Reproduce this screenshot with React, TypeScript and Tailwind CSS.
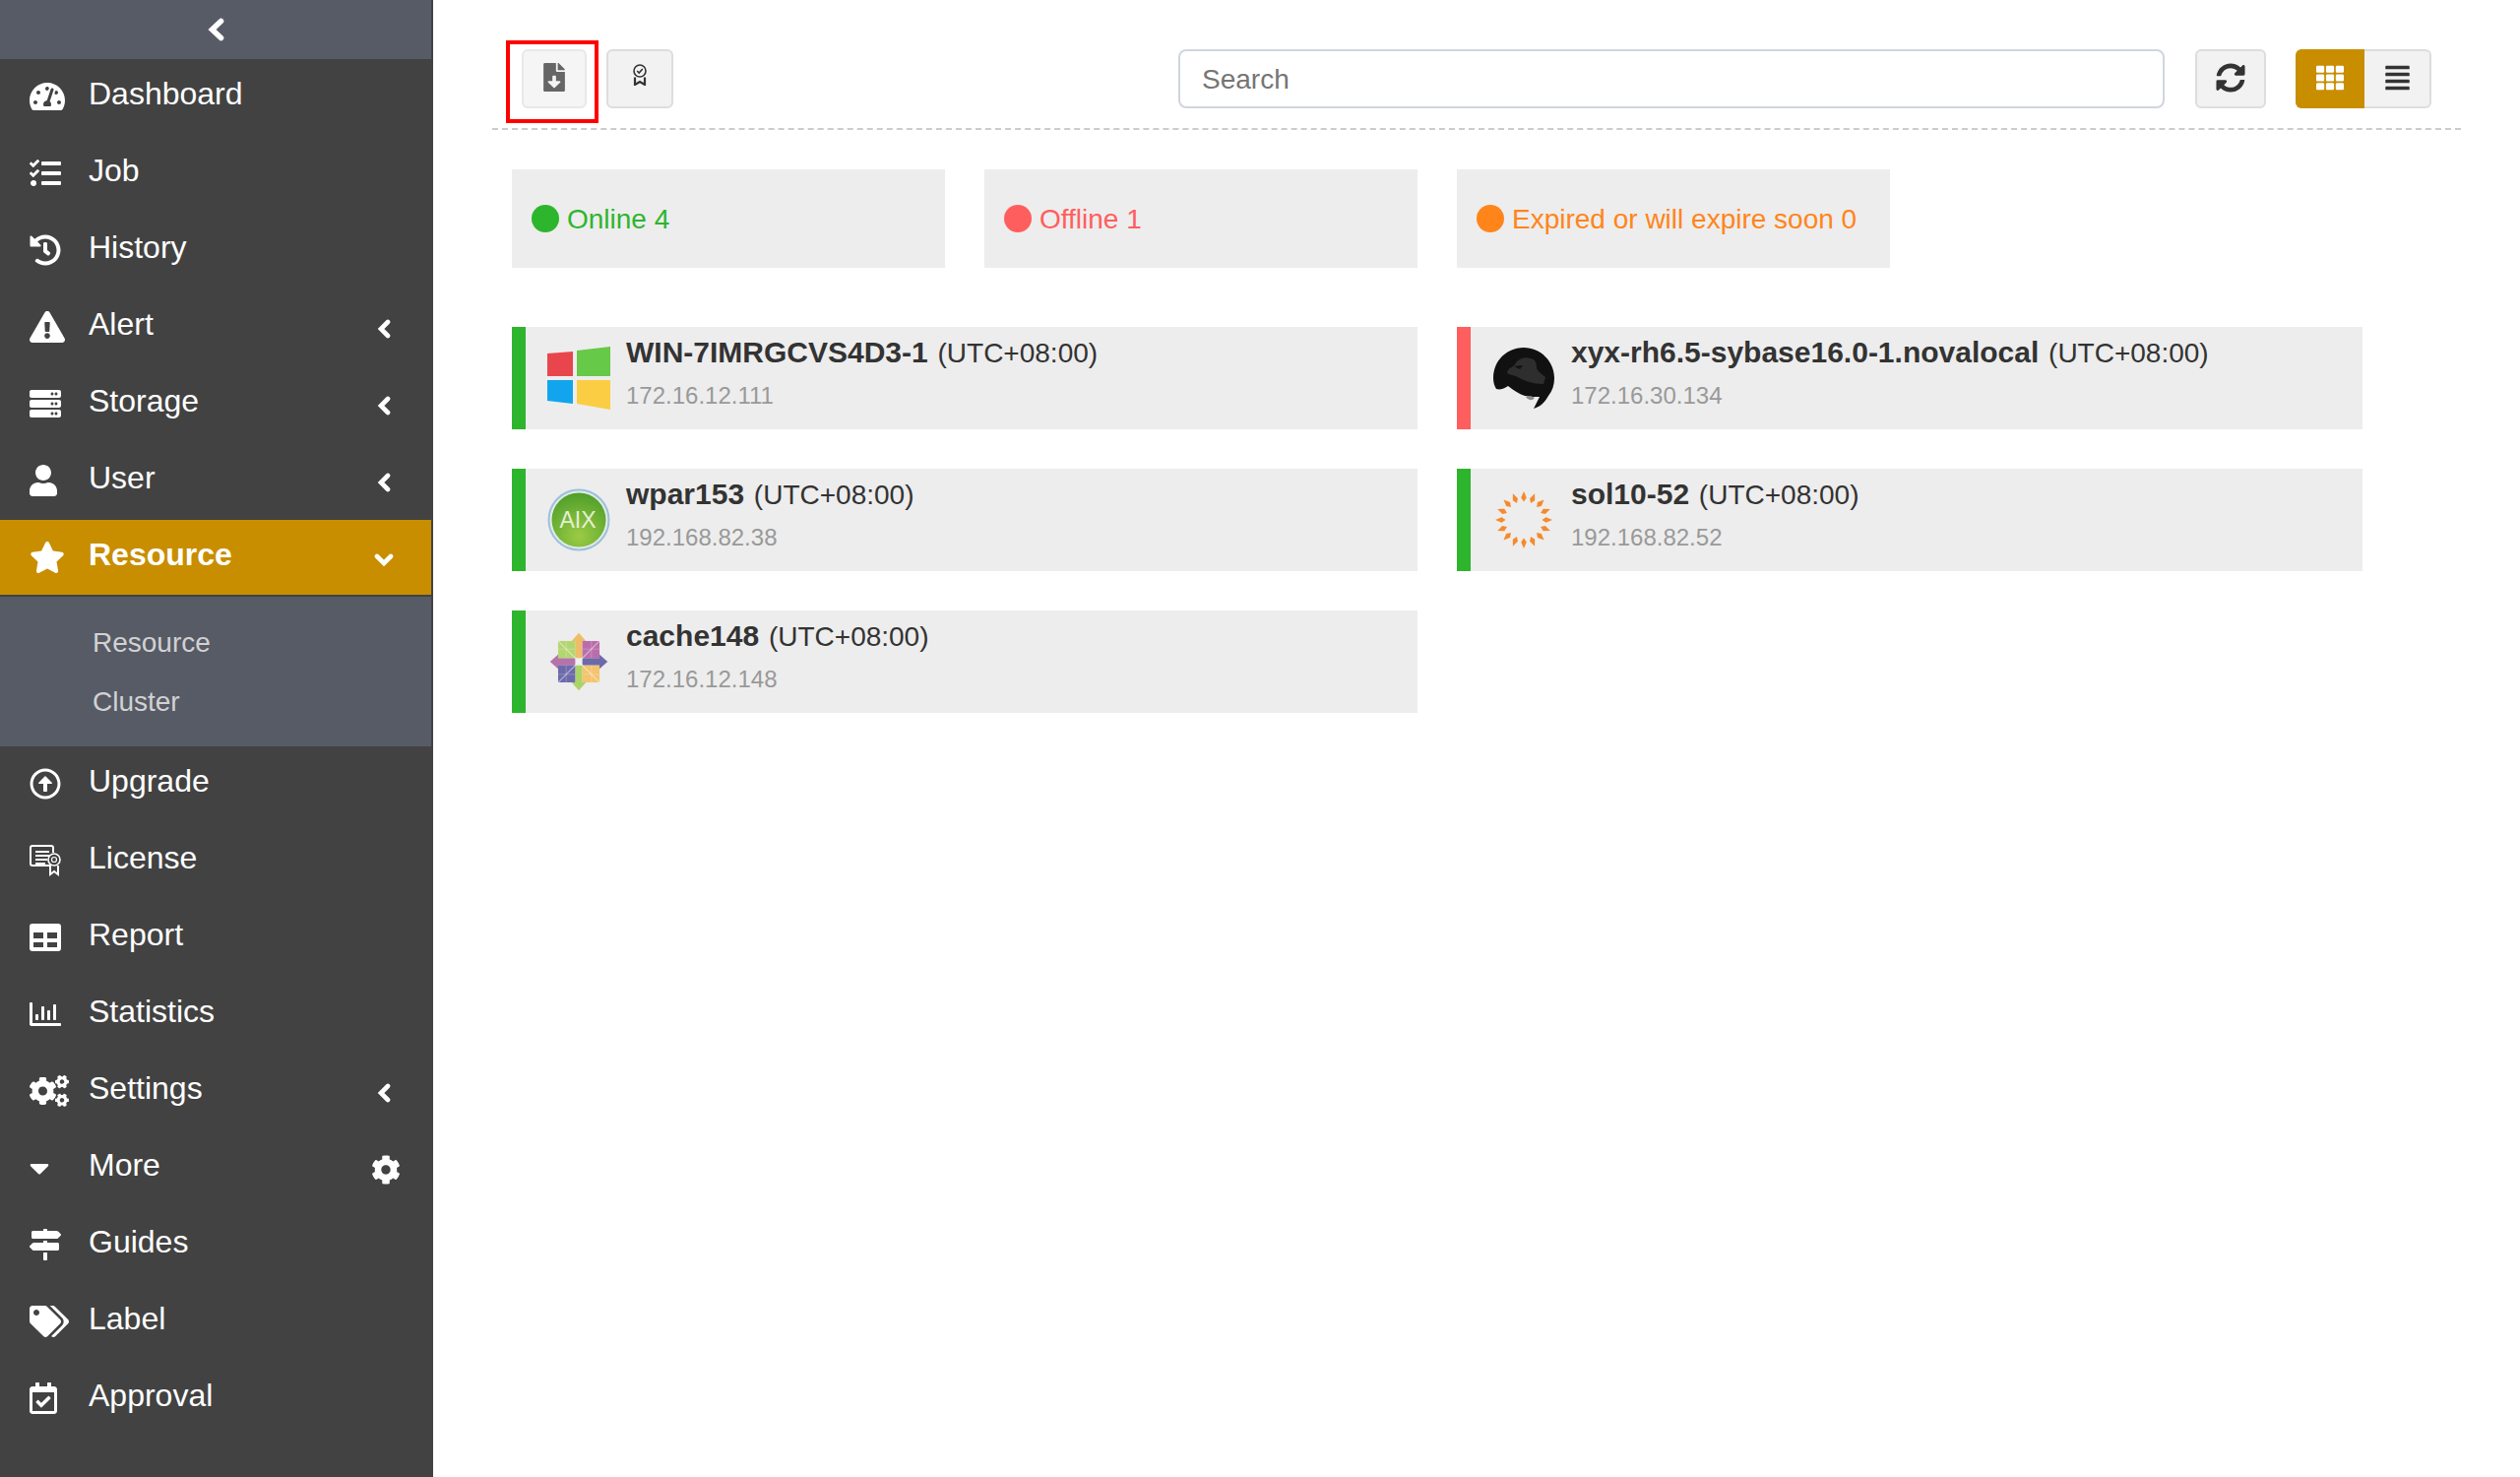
import { FC, ReactNode } from 'react';
import {
  FaAlignJustify,
  FaCaretDown,
  FaCog,
  FaCogs,
  FaExclamationTriangle,
  FaFileDownload,
  FaHistory,
  FaMapSigns,
  FaRegArrowAltCircleUp,
  FaRegCalendarCheck,
  FaRegChartBar,
  FaServer,
  FaStar,
  FaSyncAlt,
  FaTachometerAlt,
  FaTags,
  FaTasks,
  FaTh,
  FaUser,
} from 'react-icons/fa';

const ChevronLeft = () => (
  <svg width="14" height="20" viewBox="0 0 14 20" fill="none" stroke="currentColor" strokeWidth="4.6" strokeLinecap="round" className="-ml-[2px]">
    <path d="M11 3l-7 7 7 7" />
  </svg>
);

const ChevronDown = () => (
  <svg width="20" height="13" viewBox="0 0 20 13" fill="none" stroke="currentColor" strokeWidth="4.6" strokeLinecap="round">
    <path d="M3 3l7 7 7-7" />
  </svg>
);

const LicenseIcon = () => (
  <svg width="32" height="32" viewBox="0 0 32 32" fill="none" stroke="currentColor">
    <path d="M22 21H3a2 2 0 0 1-2-2V3a2 2 0 0 1 2-2h19a2 2 0 0 1 2 2v5" strokeWidth="2" />
    <path d="M6 7h14M6 11h14M6 15h12M6 19h10" strokeWidth="2" />
    <circle cx="25" cy="15" r="6" strokeWidth="1.6" />
    <circle cx="25" cy="15" r="2.5" strokeWidth="1.2" />
    <path d="M21 21v9l4-3 4 3v-9" strokeWidth="2" />
  </svg>
);

const ReportIcon = () => (
  <svg width="32" height="28" viewBox="0 0 32 28" fill="currentColor">
    <path
      fillRule="evenodd"
      d="M3 0h26a3 3 0 0 1 3 3v22a3 3 0 0 1-3 3H3a3 3 0 0 1-3-3V3a3 3 0 0 1 3-3zM4 9v6h10V9zm14 0v6h10V9zM4 19v5h10v-5zm14 0v5h10v-5z"
    />
  </svg>
);

const WindowsLogo = () => (
  <svg width="64" height="64" viewBox="0 0 64 64">
    <polygon points="0,7 26,5 26,30 0,30" fill="#e8464c" />
    <polygon points="30,4 64,0 64,30 30,30" fill="#66c947" />
    <polygon points="0,34 26,34 26,58 0,55" fill="#12a5ee" />
    <polygon points="30,34 64,34 64,64 30,58" fill="#fbcd42" />
  </svg>
);

const AixLogo = () => (
  <svg width="64" height="64" viewBox="0 0 64 64">
    <defs>
      <radialGradient id="aix" cx="0.5" cy="0.8" r="0.8">
        <stop offset="0" stopColor="#9ccb45" />
        <stop offset="1" stopColor="#4f9f2a" />
      </radialGradient>
    </defs>
    <circle cx="32" cy="32" r="30.5" fill="#e3ebe6" stroke="#9cc0dc" strokeWidth="2" />
    <circle cx="32" cy="32" r="27.5" fill="url(#aix)" />
    <text x="31" y="40" textAnchor="middle" fontSize="23" fill="#e3efd6" fontFamily="Liberation Sans">
      AIX
    </text>
  </svg>
);

const RedHatLogo = () => (
  <svg width="64" height="64" viewBox="0 0 64 64">
    <path
      d="M32 1C15 1 1 14 1 32c0 4 1 8 3 11 4 1 8 0 12-3 5 4 11 8 17 10 5 1 11 1 15 1-2 4-4 8-6 12 9-3 12-8 15-13 4-5 6-11 6-18C63 15 49 1 32 1z"
      fill="#111"
    />
    <path
      d="M15 27c1-6 5-5 8-9 3-6 10-8 16-6 5 1 6 5 6 9 0 3 5 7 9 10l-2 7c-11 0-19-3-26-7-4-2-8-2-11-4z"
      fill="#2e2e2e"
    />
    <path d="M22 20l9-1-3 4z" fill="#111" />
    <path d="M34 51c3-1 6-1 9 1-2 3-6 3-9-1z" fill="#8a8a8a" />
  </svg>
);

const SOLARIS_RAYS = Array.from({ length: 16 }, (_, i) => i * 22.5);

const SolarisLogo = () => (
  <svg width="64" height="64" viewBox="0 0 64 64">
    {SOLARIS_RAYS.map((deg) => (
      <polygon
        key={deg}
        points="32,3 34.8,9.500 32,13.500 29.200,9.500"
        fill="#f58a2c"
        transform={`rotate(${deg} 32 32)`}
      />
    ))}
  </svg>
);

const CentosLogo = () => (
  <svg width="64" height="64" viewBox="-3 -3 70 70" className="opacity-80">
    <polygon points="32,0 40,9 36,9 36,28 28,28 28,9 24,9" fill="#f0b24a" />
    <polygon points="64,32 55,40 55,36 36,36 36,28 55,28 55,24" fill="#4e4a9c" />
    <polygon points="32,64 24,55 28,55 28,36 36,36 36,55 40,55" fill="#9ccd4a" />
    <polygon points="0,32 9,24 9,28 28,28 28,36 9,36 9,40" fill="#a8559c" />
    <rect x="9" y="9" width="19" height="19" fill="#a6d152" />
    <rect x="36" y="9" width="19" height="19" fill="#ad4f9b" />
    <rect x="36" y="36" width="19" height="19" fill="#f6bb4f" />
    <rect x="9" y="36" width="19" height="19" fill="#4e4a9c" />
    <path d="M9 9l23 23M55 9L32 32M9 55l23-23M55 55L32 32" stroke="#ffffff" strokeOpacity="0.5" strokeWidth="1.2" />
    <path d="M18 9v19M9 18h19M46 9v19M36 18h19M18 36v19M9 46h19M46 36v19M36 46h19" stroke="#ffffff" strokeOpacity="0.25" strokeWidth="1" />
  </svg>
);

interface MenuProps {
  icon: ReactNode;
  label: string;
  right?: ReactNode;
}

const MenuItem: FC<MenuProps> = ({ icon, label, right }) => (
  <div className="relative flex h-[78px] pt-[13px] text-[32px] leading-[44px] text-white">
    <span className="flex h-[50px] w-[90px] shrink-0 items-center pl-[30px]">{icon}</span>
    <span>{label}</span>
    {right && <span className="absolute top-[26px] left-[375px] flex h-[28px] w-[32px] items-center justify-center">{right}</span>}
  </div>
);

const icon32 = 'h-[32px] w-[32px]';
const icon36 = 'h-[32px] w-[36px]';
const icon28 = 'h-[32px] w-[28px]';
const icon40 = 'h-[32px] w-[40px]';

const Sidebar = () => (
  <aside className="h-screen w-[440px] shrink-0 bg-[#424242] pr-[2px]">
    <div className="flex h-[60px] items-center justify-center bg-[#575b66] text-white">
      <svg width="17" height="24" viewBox="0 0 17 24" fill="none" stroke="currentColor" strokeWidth="5.6" strokeLinecap="round">
        <path d="M13.5 3.5L4.5 12l9 8.500" />
      </svg>
    </div>
    <MenuItem icon={<FaTachometerAlt className={icon36} />} label="Dashboard" />
    <MenuItem icon={<FaTasks className={icon32} />} label="Job" />
    <MenuItem icon={<FaHistory className={icon32} />} label="History" />
    <MenuItem icon={<FaExclamationTriangle className={icon36} />} label="Alert" right={<ChevronLeft />} />
    <MenuItem icon={<FaServer className={icon32} />} label="Storage" right={<ChevronLeft />} />
    <MenuItem icon={<FaUser className={icon28} />} label="User" right={<ChevronLeft />} />
    <div className="relative flex h-[76px] bg-[#c88e00] pt-[13px] text-[32px] leading-[44px] font-bold text-white">
      <span className="flex h-[50px] w-[90px] shrink-0 items-center pl-[30px]">
        <FaStar className={icon36} />
      </span>
      <span>Resource</span>
      <span className="absolute top-[34px] left-[380px]">
        <ChevronDown />
      </span>
    </div>
    <div className="mt-[2px] h-[152px] bg-[#575b66] pt-[17px] pl-[94px] text-[28px] leading-[60px] text-[#d2d2d2]">
      <div>Resource</div>
      <div>Cluster</div>
    </div>
    <MenuItem icon={<FaRegArrowAltCircleUp className={icon32} />} label="Upgrade" />
    <MenuItem icon={<LicenseIcon />} label="License" />
    <MenuItem icon={<ReportIcon />} label="Report" />
    <MenuItem icon={<FaRegChartBar className={icon32} />} label="Statistics" />
    <MenuItem icon={<FaCogs className={icon40} />} label="Settings" right={<ChevronLeft />} />
    <MenuItem
      icon={<FaCaretDown className="h-[32px] w-[20px]" />}
      label="More"
      right={<FaCog className="ml-[2px] h-[30px] w-[30px] shrink-0" />}
    />
    <MenuItem icon={<FaMapSigns className={icon32} />} label="Guides" />
    <MenuItem icon={<FaTags className={icon40} />} label="Label" />
    <MenuItem icon={<FaRegCalendarCheck className={icon28} />} label="Approval" />
  </aside>
);

const Toolbar = () => (
  <div className="flex h-[132px] items-start border-b-2 border-dashed border-[#cccccc] pt-[50px] pl-[30px] pr-[30px]">
    <div className="relative">
      <button className="flex h-[60px] w-[66px] items-center justify-center rounded-[6px] border-2 border-[#e8e8e8] bg-[#f5f5f5] text-[#666666]">
        <FaFileDownload className="-mt-[3px] h-[29px] w-[22px]" />
      </button>
      <div className="absolute top-[-9px] left-[-16px] h-[84px] w-[94px] border-[4px] border-[#ff0000]" />
    </div>
    <button className="ml-[20px] flex h-[60px] w-[68px] items-center justify-center rounded-[6px] border-2 border-[#dddddd] bg-[#f2f2f2] text-[#333333]">
      <svg width="14" height="22" viewBox="0 0 14 22" fill="none" stroke="currentColor" strokeWidth="1.6" className="-mt-[8px]">
        <circle cx="7" cy="7" r="6" />
        <path d="M4.2 7l2 2 3.6-4" />
        <path d="M2 13.5V21l5-3 5 3v-7.500" strokeWidth="2.200" />
      </svg>
    </button>
    <input
      placeholder="Search"
      className="ml-[513px] h-[60px] w-[1002px] rounded-[8px] border-2 border-[#d0d5de] bg-white px-[22px] pt-[2px] text-[28px] text-[#333333] outline-none placeholder:text-[#757575]"
    />
    <button className="ml-[31px] flex h-[60px] w-[72px] items-center justify-center rounded-[6px] border-2 border-[#dddddd] bg-[#f2f2f2] text-[#333333]">
      <FaSyncAlt className="-mt-[2px] h-[30px] w-[30px]" />
    </button>
    <div className="ml-[30px] flex">
      <button className="flex h-[60px] w-[70px] items-center justify-center rounded-l-[6px] bg-[#c88e00] text-white">
        <FaTh className="-mt-[3px] h-[28px] w-[28px]" />
      </button>
      <button className="flex h-[60px] w-[68px] items-center justify-center rounded-r-[6px] border-2 border-l-0 border-[#dddddd] bg-[#f2f2f2] text-[#333333]">
        <FaAlignJustify className="-mt-[3px] h-[28px] w-[25px]" />
      </button>
    </div>
  </div>
);

const StatusBox: FC<{ dot: string; text: string; label: string }> = ({ dot, text, label }) => (
  <div className={`flex h-[100px] w-[440px] items-center bg-[#ededed] pl-[20px] text-[28px] ${text}`}>
    <span className={`mr-[8px] h-[28px] w-[28px] rounded-full ${dot}`} />
    <span className="pt-[1px]">{label}</span>
  </div>
);

interface IHost {
  name: string;
  ip: string;
  bar: string;
  logo: ReactNode;
}

const hosts: IHost[] = [
  { name: 'WIN-7IMRGCVS4D3-1', ip: '172.16.12.111', bar: 'border-[#2db52d]', logo: <WindowsLogo /> },
  { name: 'xyx-rh6.5-sybase16.0-1.novalocal', ip: '172.16.30.134', bar: 'border-[#ff5e5e]', logo: <RedHatLogo /> },
  { name: 'wpar153', ip: '192.168.82.38', bar: 'border-[#2db52d]', logo: <AixLogo /> },
  { name: 'sol10-52', ip: '192.168.82.52', bar: 'border-[#2db52d]', logo: <SolarisLogo /> },
  { name: 'cache148', ip: '172.16.12.148', bar: 'border-[#2db52d]', logo: <CentosLogo /> },
];

const HostCard: FC<{ host: IHost }> = ({ host }) => (
  <div className={`flex h-[104px] border-l-[14px] bg-[#ededed] ${host.bar}`}>
    <div className="mt-[20px] ml-[22px] h-[64px] w-[64px] shrink-0">{host.logo}</div>
    <div className="ml-[16px]">
      <div className="mt-[6px] h-[40px] leading-[40px] text-[#333333]">
        <span className="text-[30px] font-bold">{host.name}</span>
        <span className="ml-[2px] text-[28px]"> (UTC+08:00)</span>
      </div>
      <div className="mt-[6px] text-[24px] leading-[36px] text-[#999999]">{host.ip}</div>
    </div>
  </div>
);

const App = () => (
  <div className="flex h-screen overflow-hidden bg-white font-['Liberation_Sans',sans-serif]">
    <Sidebar />
    <main className="flex-1 px-[60px]">
      <Toolbar />
      <div className="mt-[40px] ml-[20px] flex gap-[40px]">
        <StatusBox dot="bg-[#2db52d]" text="text-[#2db52d]" label="Online 4" />
        <StatusBox dot="bg-[#ff5e5e]" text="text-[#ff5e5e]" label="Offline 1" />
        <StatusBox dot="bg-[#ff851b]" text="text-[#ff851b]" label="Expired or will expire soon 0" />
      </div>
      <div className="mt-[60px] ml-[20px] grid w-[1880px] grid-cols-2 gap-x-[40px] gap-y-[40px]">
        {hosts.map((h) => (
          <HostCard key={h.name} host={h} />
        ))}
      </div>
    </main>
  </div>
);

export default App;
